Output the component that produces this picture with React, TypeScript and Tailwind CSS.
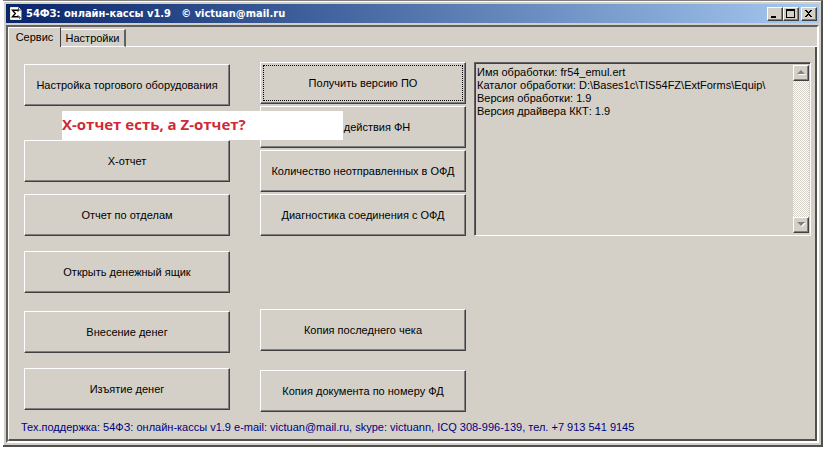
import type { ReactNode } from 'react'
import clsx from 'clsx'

const SERVICE_BUTTONS = [
  { label: 'Настройка торгового оборудования', gap: 'mt-0' },
  { label: 'X-отчет', gap: 'mt-[34px]' },
  { label: 'Отчет по отделам', gap: 'mt-3' },
  { label: 'Открыть денежный ящик', gap: 'mt-[15px]' },
  { label: 'Внесение денег', gap: 'mt-[18px]' },
  { label: 'Изъятие денег', gap: 'mt-[15px]' },
]

const FISCAL_BUTTONS = [
  { label: 'Получить версию ПО', gap: 'mt-0', focused: true },
  { label: 'Срок действия ФН', gap: 'mt-0.5' },
  { label: 'Количество неотправленных в ОФД', gap: 'mt-0.5' },
  { label: 'Диагностика соединения с ОФД', gap: 'mt-0.5' },
  { label: 'Копия последнего чека', gap: 'mt-[73px]' },
  { label: 'Копия документа по номеру ФД', gap: 'mt-[19px]' },
]

const LOG = [
  'Имя обработки: fr54_emul.ert',
  'Каталог обработки: D:\\Bases1c\\TIS54FZ\\ExtForms\\Equip\\',
  'Версия обработки: 1.9',
  'Версия драйвера ККТ: 1.9',
].join('\n')

function PushButton({ label, gap, focused }: { label: string; gap: string; focused?: boolean }) {
  return (
    <button
      type="button"
      className={clsx(
        'flex h-[42px] w-full p-0.5 whitespace-nowrap border border-t-white border-l-white border-r-[#404040] border-b-[#404040] shadow-[inset_-1px_-1px_0_#808080]',
        gap,
      )}
    >
      <span
        className={clsx(
          'flex flex-1 items-center justify-center self-stretch border border-dotted',
          focused ? 'border-black' : 'border-transparent',
        )}
      >
        {label}
      </span>
    </button>
  )
}

function CaptionButton({ label, children }: { label: string; children: ReactNode }) {
  return (
    <button
      type="button"
      aria-label={label}
      className="flex h-3.5 w-4 items-center justify-center bg-[#d4d0c8] border border-t-white border-l-white border-r-[#404040] border-b-[#404040] shadow-[inset_-1px_-1px_0_#808080]"
    >
      <svg width="10" height="10" viewBox="0 0 10 10" shapeRendering="crispEdges">
        {children}
      </svg>
    </button>
  )
}

function ScrollButton({ label, points }: { label: string; points: string }) {
  return (
    <button
      type="button"
      aria-label={label}
      className="flex size-4 items-center justify-center bg-[#d4d0c8] border border-t-white border-l-white border-r-[#404040] border-b-[#404040] shadow-[inset_-1px_-1px_0_#808080]"
    >
      <svg width="9" height="6" viewBox="0 0 9 6">
        <polygon points={points} fill="#fff" transform="translate(1 1)" />
        <polygon points={points} fill="#808080" />
      </svg>
    </button>
  )
}

export default function App() {
  return (
    <div className="bg-white pl-[3px] pr-0.5 pb-0.5 font-['Liberation_Sans',Arial,sans-serif] text-[11px] leading-[13px] text-black">
      <div className="bg-[#d4d0c8] border-t border-r-2 border-b-2 border-t-[#808080] border-r-[#505050] border-b-[#505050]">
        <div className="border-t border-l border-white p-0.5">
          {/* Title bar */}
          <header className="flex h-[19px] items-center gap-1 bg-linear-to-r from-[#0a246a] to-[#a6caf0] pl-1 pr-0.5">
            <svg width="12" height="13" viewBox="0 0 12 13">
              <path d="M0.5 0.5h8l2.5 2.5v9.5H0.5z" fill="#fff" stroke="#f0f0d0" />
              <path d="M8.5 0.5v2.5H11" fill="none" stroke="#555" />
              <path d="M8 4.5V3.2H2.5L5.3 6.5 2.5 9.8H8V8.5" fill="none" stroke="#000" strokeWidth="1.4" />
              <path d="M8 10.5h3M9.5 9v3" stroke="#2f8f3a" />
            </svg>
            <h1 className="flex-1 whitespace-pre font-['DejaVu_Sans_Condensed','DejaVu_Sans',sans-serif] text-[11px] font-bold text-white">
              {'54ФЗ: онлайн-кассы v1.9   © victuan@mail.ru'}
            </h1>
            <div className="flex">
              <CaptionButton label="Свернуть">
                <path d="M1 7h5v2H1z" />
              </CaptionButton>
              <CaptionButton label="Развернуть">
                <path d="M0 0h9v9H0zM1 2v6h7V2z" fillRule="evenodd" />
              </CaptionButton>
              <span className="w-0.5" />
              <CaptionButton label="Закрыть">
                <path d="M1 1h2v1h1v1h1V2h1V1h2v1H7v1H6v1H5v1h1v1h1v1h1v1H6V7H5V6H4v1H3v1H1V7h1V6h1V5h1V4H3V3H2V2H1z" />
              </CaptionButton>
            </div>
          </header>

          <main className="mt-0.5 border-2 border-t-[#606060] border-l-[#606060] border-r-white border-b-white">
            <nav className="flex items-end" role="tablist">
              <button
                type="button"
                role="tab"
                aria-selected="true"
                className="h-5 w-[53px] border-t border-l border-r border-t-white border-l-white border-r-[#404040]"
              >
                Сервис
              </button>
              <button
                type="button"
                role="tab"
                aria-selected="false"
                className="h-[18px] w-[65px] border-t border-r-2 border-b border-t-white border-r-[#606060] border-b-white"
              >
                Настройки
              </button>
              <span className="flex-1 self-end border-b border-white" />
            </nav>

            <section className="border-l border-r-2 border-b-2 border-l-white border-r-[#505050] border-b-[#505050] pt-[15px] pr-1 pb-[5px] pl-[15px]">
              <div className="grid grid-cols-[206px_206px_minmax(0,1fr)]">
                <div className="relative pt-0.5">
                  {SERVICE_BUTTONS.map((b) => (
                    <PushButton key={b.label} {...b} />
                  ))}
                  {/* Note lying over both button columns */}
                  <p className="absolute top-[49px] left-[38px] z-10 h-[29px] w-[281px] bg-white font-['Open_Sans',sans-serif] text-[15px] leading-[26px] font-bold whitespace-nowrap text-[#cf2a35]">
                    X-отчет есть, а Z-отчет?
                  </p>
                </div>

                <div className="ml-[30px] -mr-[30px]">
                  {FISCAL_BUTTONS.map((b) => (
                    <PushButton key={b.label} {...b} />
                  ))}
                </div>

                <div className="ml-[38px] flex h-[174px] border border-t-[#606060] border-l-[#606060] border-r-white border-b-white shadow-[inset_1px_1px_0_#404040]">
                  <textarea
                    readOnly
                    aria-label="Сообщения"
                    value={LOG}
                    className="min-w-0 flex-1 resize-none overflow-hidden px-0.5 py-[3px] outline-none"
                  />
                  <div className="my-0.5 mr-px flex w-4 flex-col justify-between bg-[repeating-conic-gradient(#fff_0_25%,#d4d0c8_0_50%)] bg-size-[2px_2px]">
                    <ScrollButton label="Вверх" points="4,0 8,4 0,4" />
                    <ScrollButton label="Вниз" points="0,0 8,0 4,4" />
                  </div>
                </div>
              </div>

              <footer className="-ml-[3px] mt-[9px] whitespace-nowrap text-[#000080]">
                Тех.поддержка: 54ФЗ: онлайн-кассы v1.9 e-mail: victuan@mail.ru, skype: victuann, ICQ 308-996-139, тел. +7 913 541 9145
              </footer>
            </section>
          </main>
        </div>
      </div>
    </div>
  )
}
